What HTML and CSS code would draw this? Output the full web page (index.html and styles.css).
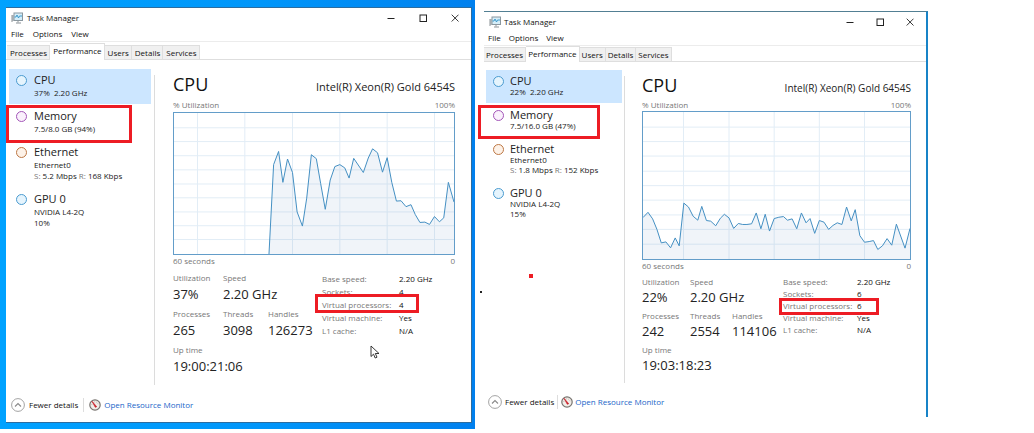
FILE: index.html
```html
<!DOCTYPE html>
<html lang="en">
<head>
<meta charset="utf-8">
<title>Task Manager comparison</title>
<link rel="stylesheet" href="styles.css">
</head>
<body>
<svg class="defs" aria-hidden="true">
  <symbol id="app" viewBox="0 0 12 12"><path d="M1 3v7M2 3v6" stroke="#8b9297"/><rect x="3" y="1" width="8.5" height="7.5" fill="#d5edf8" stroke="#8a979f"/><path d="M3.5 5h1.5l1-2 1.5 3 1-2h2.500" fill="none" stroke="#2e93c8" stroke-width=".9"/><path d="M7 9v1.500M5 11h5" stroke="#8b9297"/></symbol>
  <symbol id="min" viewBox="0 0 8 8"><path d="M.5 4.500h7" stroke="#222"/></symbol>
  <symbol id="max" viewBox="0 0 8 8"><rect x="1" y="1" width="6.500" height="6.500" fill="none" stroke="#222"/></symbol>
  <symbol id="close" viewBox="0 0 8 8"><path d="M.7.7l6.800 6.800M7.500.7L.7 7.500" stroke="#222" stroke-width=".9"/></symbol>
  <symbol id="up" viewBox="0 0 14 14"><circle cx="7" cy="7" r="6.400" fill="#fff" stroke="#8c8c8c" stroke-width=".8"/><path d="M4 8.500l3-3 3 3" fill="none" stroke="#8a8a8a" stroke-width="1.100"/></symbol>
  <symbol id="gauge" viewBox="0 0 12 12"><circle cx="6" cy="6" r="5.200" fill="#f1eee9" stroke="#77736f" stroke-width="1.200"/><path d="M2.800 6a3.200 3.200 0 0 1 6.400 0" fill="none" stroke="#aaa59f" stroke-width=".7" stroke-dasharray="1 1"/><path d="M3 2.300l4.700 5.400-1.400.6z" fill="#c9202a" stroke="#c9202a" stroke-width=".7"/></symbol>
</svg>
<main class="page">
  <section class="desktop">
    <article class="window">
      <header class="titlebar">
        <svg class="app-icon"><use href="#app"/></svg><h1 class="title">Task Manager</h1>
        <div class="controls">
          <button class="control" aria-label="Minimize"><svg><use href="#min"/></svg></button>
          <button class="control" aria-label="Maximize"><svg><use href="#max"/></svg></button>
          <button class="control" aria-label="Close"><svg><use href="#close"/></svg></button>
        </div>
      </header>
      <nav class="menu"><button>File</button><button>Options</button><button>View</button></nav>
      <nav class="tabs"><button>Processes</button><button class="active">Performance</button><button>Users</button><button>Details</button><button>Services</button></nav>
      <div class="body">
        <aside class="sidebar">
          <button class="item selected"><i class="dot blue"></i><span class="name">CPU</span><span class="sub">37%&nbsp; 2.20 GHz</span></button>
          <button class="item"><i class="dot purple"></i><span class="name">Memory</span><span class="sub">7.5/8.0 GB (94%)</span><i class="mark mark-memory"></i></button>
          <button class="item"><i class="dot orange"></i><span class="name">Ethernet</span><span class="sub">Ethernet0</span><span class="sub"><em>S:</em> 5.2 Mbps <em>R:</em> 168 Kbps</span></button>
          <button class="item"><i class="dot blue"></i><span class="name">GPU 0</span><span class="sub">NVIDIA L4-2Q</span><span class="sub">10%</span></button>
        </aside>
        <div class="separator"></div>
        <section class="panel">
          <div class="heading"><h2>CPU</h2><span class="model">Intel(R) Xeon(R) Gold 6454S</span></div>
          <div class="axis axis-top"><span>% Utilization</span><span>100%</span></div>
          <svg class="chart" viewBox="-186 51 846 429" preserveAspectRatio="none" role="img" aria-label="CPU utilization over 60 seconds">
            <path class="grid" d="M-115 51v429M28 51v429M172 51v429M315 51v429M458 51v429M601 51v429M-186 96h846M-186 138h846M-186 181h846M-186 224h846M-186 267h846M-186 309h846M-186 352h846M-186 394h846M-186 436h846"/>
            <polygon class="area" points="101,480 115,208 130,168 143,262 157,191 172,232 186,352 202,395 215,310 229,178 244,190 257,265 271,344 286,255 300,214 315,208 330,218 343,249 357,189 386,232 401,188 414,160 429,172 444,231 458,187 472,262 486,319 500,318 515,336 530,330 543,360 557,384 572,383 586,390 601,366 616,382 629,370 643,262 660,322 660,480"/>
            <polyline class="line" points="101,480 115,208 130,168 143,262 157,191 172,232 186,352 202,395 215,310 229,178 244,190 257,265 271,344 286,255 300,214 315,208 330,218 343,249 357,189 386,232 401,188 414,160 429,172 444,231 458,187 472,262 486,319 500,318 515,336 530,330 543,360 557,384 572,383 586,390 601,366 616,382 629,370 643,262 660,322"/>
          </svg>
          <div class="axis"><span>60 seconds</span><span>0</span></div>
          <div class="stats">
            <div class="figures">
              <div class="row"><p>Utilization<b>37%</b></p><p class="wide">Speed<b>2.20 GHz</b></p></div>
              <div class="row"><p>Processes<b>265</b></p><p>Threads<b>3098</b></p><p>Handles<b>126273</b></p></div>
              <div class="row"><p class="wide">Up time<b>19:00:21:06</b></p></div>
            </div>
            <dl class="details"><dt>Base speed:</dt><dd>2.20 GHz</dd><dt>Sockets:</dt><dd>4</dd><dt>Virtual processors:</dt><dd>4</dd><dt>Virtual machine:</dt><dd>Yes</dd><dt>L1 cache:</dt><dd>N/A</dd><i class="mark mark-processors"></i></dl>
          </div>
        </section>
      </div>
      <footer class="footer"><button class="fewer"><svg class="up"><use href="#up"/></svg>Fewer details</button><a href="#monitor"><svg class="gauge"><use href="#gauge"/></svg>Open Resource Monitor</a></footer>
      <svg class="cursor" viewBox="0 0 10 14"><path d="M1 1v10.500l2.500-2.300 1.700 3.800 1.800-.8-1.700-3.700H9z" fill="#fff" stroke="#222" stroke-width=".9"/></svg>
    </article>
  </section>
  <section class="sheet">
    <article class="window compact">
      <header class="titlebar">
        <svg class="app-icon"><use href="#app"/></svg><h1 class="title">Task Manager</h1>
        <div class="controls">
          <button class="control" aria-label="Minimize"><svg><use href="#min"/></svg></button>
          <button class="control" aria-label="Maximize"><svg><use href="#max"/></svg></button>
          <button class="control" aria-label="Close"><svg><use href="#close"/></svg></button>
        </div>
      </header>
      <nav class="menu"><button>File</button><button>Options</button><button>View</button></nav>
      <nav class="tabs"><button>Processes</button><button class="active">Performance</button><button>Users</button><button>Details</button><button>Services</button></nav>
      <div class="body">
        <aside class="sidebar">
          <button class="item selected"><i class="dot blue"></i><span class="name">CPU</span><span class="sub">22%&nbsp; 2.20 GHz</span></button>
          <button class="item"><i class="dot purple"></i><span class="name">Memory</span><span class="sub">7.5/16.0 GB (47%)</span><i class="mark mark-memory"></i></button>
          <button class="item"><i class="dot orange"></i><span class="name">Ethernet</span><span class="sub">Ethernet0</span><span class="sub"><em>S:</em> 1.8 Mbps <em>R:</em> 152 Kbps</span></button>
          <button class="item"><i class="dot blue"></i><span class="name">GPU 0</span><span class="sub">NVIDIA L4-2Q</span><span class="sub">15%</span></button>
        </aside>
        <div class="separator"></div>
        <section class="panel">
          <div class="heading"><h2>CPU</h2><span class="model">Intel(R) Xeon(R) Gold 6454S</span></div>
          <div class="axis axis-top"><span>% Utilization</span><span>100%</span></div>
          <svg class="chart" viewBox="36 33 804 447" preserveAspectRatio="none" role="img" aria-label="CPU utilization over 60 seconds">
            <path class="grid" d="M158 33v447M295 33v447M431 33v447M567 33v447M703 33v447M36 79h804M36 123h804M36 167h804M36 213h804M36 257h804M36 301h804M36 346h804M36 390h804M36 435h804"/>
            <polygon class="area" points="36,480 36,354 51,338 65,358 78,390 91,431 105,428 119,446 133,416 145,440 159,310 173,322 187,350 201,362 213,320 227,363 240,365 255,379 269,356 281,344 295,355 309,387 323,372 336,375 349,375 363,373 377,340 391,388 404,344 417,395 431,357 445,353 459,351 471,362 485,358 499,388 513,340 527,370 539,357 553,402 567,363 581,368 595,390 608,378 621,370 635,375 649,322 663,364 675,330 689,409 703,429 717,427 730,424 743,451 757,440 771,418 785,438 799,374 825,447 840,387 840,480"/>
            <polyline class="line" points="36,354 51,338 65,358 78,390 91,431 105,428 119,446 133,416 145,440 159,310 173,322 187,350 201,362 213,320 227,363 240,365 255,379 269,356 281,344 295,355 309,387 323,372 336,375 349,375 363,373 377,340 391,388 404,344 417,395 431,357 445,353 459,351 471,362 485,358 499,388 513,340 527,370 539,357 553,402 567,363 581,368 595,390 608,378 621,370 635,375 649,322 663,364 675,330 689,409 703,429 717,427 730,424 743,451 757,440 771,418 785,438 799,374 825,447 840,387"/>
          </svg>
          <div class="axis"><span>60 seconds</span><span>0</span></div>
          <div class="stats">
            <div class="figures">
              <div class="row"><p>Utilization<b>22%</b></p><p class="wide">Speed<b>2.20 GHz</b></p></div>
              <div class="row"><p>Processes<b>242</b></p><p>Threads<b>2554</b></p><p>Handles<b>114106</b></p></div>
              <div class="row"><p class="wide">Up time<b>19:03:18:23</b></p></div>
            </div>
            <dl class="details"><dt>Base speed:</dt><dd>2.20 GHz</dd><dt>Sockets:</dt><dd>6</dd><dt>Virtual processors:</dt><dd>6</dd><dt>Virtual machine:</dt><dd>Yes</dd><dt>L1 cache:</dt><dd>N/A</dd><i class="mark mark-processors"></i></dl>
          </div>
        </section>
      </div>
      <footer class="footer"><button class="fewer"><svg class="up"><use href="#up"/></svg>Fewer details</button><a href="#monitor"><svg class="gauge"><use href="#gauge"/></svg>Open Resource Monitor</a></footer>
    </article>
    <i class="speck red"></i><i class="speck black"></i>
  </section>
</main>
</body>
</html>
```
FILE: styles.css
```css
* { box-sizing: border-box; }
body { margin: 0; background: #fff; color: #222; font: 8px/12px "Open Sans", "Noto Sans", sans-serif; }
h1, h2, p, dl, dd { margin: 0; font-weight: 400; }
button { margin: 0; padding: 0; border: 0; background: none; color: inherit; font: inherit; text-align: left; }
svg { display: block; flex: none; }
.defs { position: absolute; width: 0; height: 0; }
.page { display: grid; grid-template-columns: 475fr 453fr 106fr; align-items: start; }
.desktop { padding: 7px 3px 6px 6px; background: linear-gradient(90deg, #00a2ff, #0096fa 55%, #0080ee); }
.sheet { position: relative; padding: 11px 0 0 9px; }

.window {
  --name-line: 14px; --sub-line: 11px; --side: 142px; --head: 30px; --axis: 13px;
  --chart: 143px; --value-line: 20px; --detail-line: 13px;
  position: relative; background: #fff; border: 1px solid #2c6da0; border-left-width: 0;
}
.compact {
  --name-line: 13px; --sub-line: 10px; --side: 136px; --head: 29px; --axis: 12px;
  --chart: 149px; --value-line: 18px; --detail-line: 12px;
  border-color: #527f93; border-right: 2px solid #1883c7; border-bottom: 0;
}
.titlebar { display: flex; align-items: center; gap: 4px; height: 19px; padding: 0 12px 0 5px; }
.compact .titlebar { gap: 3px; }
.app-icon { width: 12px; height: 12px; }
.title { font-size: 8px; color: #111; }
.controls { display: flex; gap: 24px; margin-left: auto; }
.compact .controls { gap: 22px; }
.control svg { width: 8px; height: 8px; }
.menu { display: flex; gap: 9px; height: 15px; padding: 0 5px; border-bottom: 1px solid #ececec; color: #111; }
.compact .menu { gap: 8px; padding: 0 4px; }
.tabs { display: flex; align-items: flex-end; height: 18px; padding-left: 1px; border-bottom: 1px solid #dedede; }
.tabs button { height: 14px; padding: 0 2px 0 3px; background: #f0f0f0; border: 1px solid #dedede; border-width: 1px 1px 0 0; color: #111; }
.tabs .active { height: 17px; margin-bottom: -1px; padding-bottom: 2px; background: #fff; }
.compact .tabs { height: 16px; padding-left: 0; }
.compact .tabs button { padding: 0 2px; }
.compact .tabs .active { height: 16px; padding-bottom: 2px; }

.body { display: grid; grid-template-columns: var(--side) 1px 1fr; column-gap: 3px; padding: 9px 16px 0 3px; }
.compact .body { padding: 8px 15px 0 2px; column-gap: 2px; }
.sidebar { display: flex; flex-direction: column; gap: 1px; }
.item { position: relative; display: block; padding: 4px 0 6px 25px; }
.compact .item { padding-left: 24px; }
.item span { display: block; white-space: nowrap; }
.selected { background: #cce6ff; }
.name { font-size: 11px; line-height: var(--name-line); }
.sub { line-height: var(--sub-line); }
.sub em { color: #777; font-style: normal; }
.dot { position: absolute; left: 7px; top: 6px; width: 11px; height: 11px; border: 1px solid; border-radius: 50%; }
.blue { border-color: #4a9bd0; background: #e5f4fd; }
.purple { border-color: #a355b8; background: #faf0fc; }
.orange { border-color: #bd7743; background: #fdf2e8; }
.mark { position: absolute; border: 3px solid #ed1c24; }
.mark-memory { left: -3px; top: 0; width: 126px; height: 38px; }
.compact .mark-memory { left: -8px; top: 1px; width: 122px; height: 34px; }
.separator { margin-top: 6px; background: #dcdcdc; }
.panel { padding-left: 15px; }
.heading { display: flex; justify-content: space-between; align-items: center; height: var(--head); }
.heading h2 { font-size: 18px; line-height: 28px; color: #111; }
.model { font-size: 11px; padding-top: 6px; white-space: nowrap; }
.compact .model { font-size: 10px; }
.axis { display: flex; justify-content: space-between; color: #777; }
.axis-top { height: var(--axis); }
.chart { width: 100%; height: var(--chart); border: 1px solid #639dc9; }
.chart * { vector-effect: non-scaling-stroke; }
.grid { fill: none; stroke: #e2edf6; }
.area { fill: #3b78b8; fill-opacity: .08; }
.line { fill: none; stroke: #4590c3; }
.stats { display: flex; justify-content: space-between; padding: 5px 0 9px; }
.compact .stats { padding-top: 4px; }
.figures { display: grid; row-gap: 4px; color: #777; }
.row { display: grid; grid-template-columns: 50px 45px 50px; }
.compact .row { grid-template-columns: 48px 42px 50px; }
.row .wide { grid-column: span 2; }
.row b { display: block; color: #222; font-size: 13px; font-weight: 400; line-height: var(--value-line); }
.details { position: relative; display: grid; grid-template-columns: 77px 56px; align-content: start; line-height: var(--detail-line); }
.compact .details { grid-template-columns: 74px 54px; }
.details dt { color: #777; }
.details dd { color: #111; }
.mark-processors { left: -7px; top: 22px; width: 104px; height: 19px; }
.compact .mark-processors { left: -4px; top: 22px; width: 100px; height: 17px; }

.footer { display: flex; align-items: center; height: 37px; padding: 2px 5px 0; color: #111; }
.fewer, .footer a { display: flex; align-items: center; gap: 4px; }
.fewer { padding-right: 5px; border-right: 1px solid #ddd; }
.footer a { gap: 3px; padding-left: 5px; color: #1a66c9; text-decoration: none; }
.compact .footer { height: 34px; padding: 3px 4px 0; }
.compact .footer a { gap: 2px; padding-left: 3px; }
.compact .fewer { gap: 3px; padding-right: 3px; }
.up { width: 14px; height: 14px; }
.gauge { width: 12px; height: 12px; }
.cursor { position: absolute; left: 364px; top: 337px; width: 10px; height: 14px; }
.speck { position: absolute; }
.red { left: 54px; top: 274px; width: 4px; height: 4px; background: #ed1c24; }
.black { left: 5px; top: 291px; width: 2px; height: 2px; background: #222; }
```
